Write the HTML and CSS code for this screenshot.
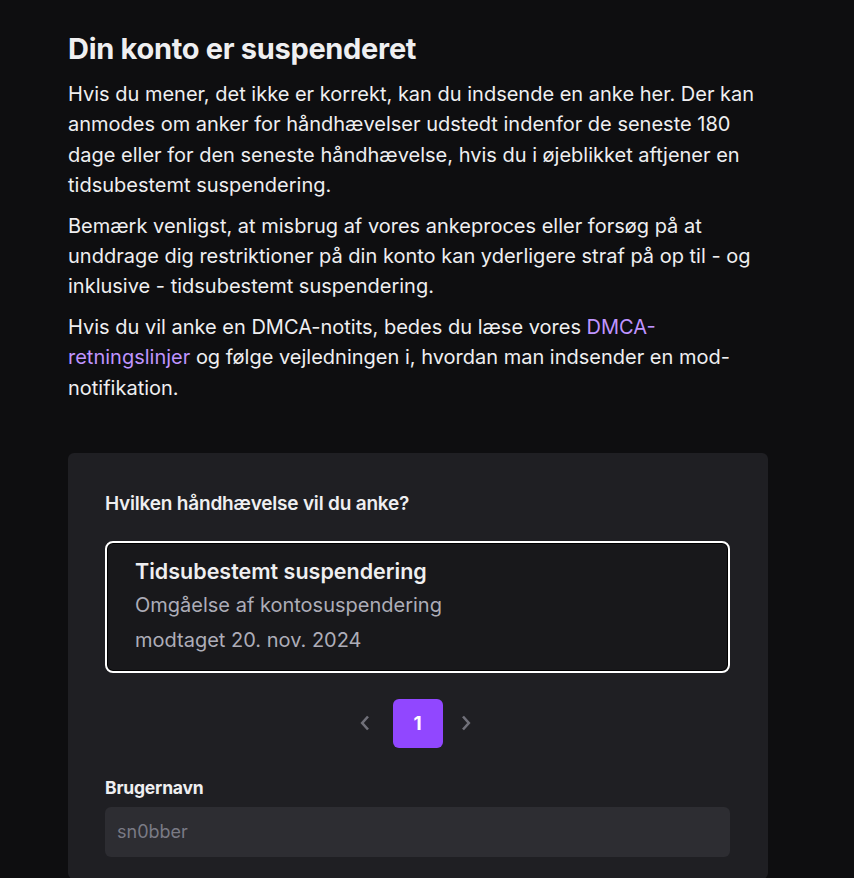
FILE: index.html
```
<!DOCTYPE html>
<html lang="da">
<head>
  <meta charset="UTF-8">
  <meta name="viewport" content="width=device-width, initial-scale=1.0">
  <title>Din konto er suspenderet</title>
  <link rel="stylesheet" href="styles.css">
</head>
<body>
  <div class="container">
    <h1 class="title">Din konto er suspenderet</h1>
    <p class="text">Hvis du mener, det ikke er korrekt, kan du indsende en anke her. Der kan anmodes om anker for håndhævelser udstedt indenfor de seneste 180 dage eller for den seneste håndhævelse, hvis du i øjeblikket aftjener en tidsubestemt suspendering.</p>
    <p class="text">Bemærk venligst, at misbrug af vores ankeproces eller forsøg på at unddrage dig restriktioner på din konto kan yderligere straf på op til - og inklusive - tidsubestemt suspendering.</p>
    <p class="text">Hvis du vil anke en DMCA-notits, bedes du læse vores <a href="#" class="link">DMCA-retningslinjer</a> og følge vejledningen i, hvordan man indsender en mod-notifikation.</p>

    <div class="card">
      <h3 class="label">Hvilken håndhævelse vil du anke?</h3>
      <div class="enforcement selected">
        <div class="enf-title">Tidsubestemt suspendering</div>
        <div class="enf-sub">Omgåelse af kontosuspendering</div>
        <div class="enf-sub">modtaget 20. nov. 2024</div>
      </div>

      <div class="pager">
        <button class="arrow prev" aria-label="Forrige">
          <svg width="10" height="16" viewBox="0 0 10 16"><path d="M8 1.5 L2.2 8 L8 14.5" fill="none" stroke="currentColor" stroke-width="2.6"/></svg>
        </button>
        <button class="page active">1</button>
        <button class="arrow next" aria-label="Næste">
          <svg width="10" height="16" viewBox="0 0 10 16"><path d="M2 1.5 L7.8 8 L2 14.5" fill="none" stroke="currentColor" stroke-width="2.6"/></svg>
        </button>
      </div>

      <label class="field-label" for="username">Brugernavn</label>
      <input id="username" class="field" type="text" placeholder="sn0bber">
    </div>
  </div>
</body>
</html>
```

FILE: styles.css
```
/* page */
body {
  margin: 0;
  padding: 0;
  background-color: #0e0e10;
  color: #efeff1;
  font-family: Inter, "Noto Sans", sans-serif;
}
.container {
  width: 700px;
  padding: 31px 0 0 68px;
}
.title {
  font-size: 29px;
  font-weight: 700;
  line-height: 36px;
  margin: 0 0 12px;
  letter-spacing: -0.3px;
}
.text {
  font-size: 20px;
  line-height: 30.3px;
  margin: 0 0 10.5px;
}
.link {
  color: #bf94ff;
  text-decoration: none;
}

/* card */
.card {
  margin-top: 50px;
  background-color: #1f1f23;
  border-radius: 6px;
  padding: 37px 38px 22px 37px;
}
.label {
  font-size: 19px;
  font-weight: 600;
  line-height: 28px;
  margin: 0 0 23px;
  letter-spacing: -0.2px;
}
.enforcement {
  border: 2px solid #ffffff;
  border-radius: 8px;
  background-color: #18181b;
  padding: 13px 28px;
  box-shadow: inset 0 0 0 1px #000;
}
.enf-title {
  font-size: 21.5px;
  font-weight: 600;
  line-height: 30px;
  margin-bottom: 2px;
}
.enf-sub {
  font-size: 20px;
  line-height: 35px;
  color: #adadb8;
}

/* pagination */
.pager {
  display: flex;
  justify-content: center;
  align-items: center;
  margin: 26px 0 28px;
}
.pager button {
  border: none;
  font-family: inherit;
  cursor: pointer;
}
.arrow {
  width: 30px;
  height: 30px;
  background: none;
  color: #707079;
  display: flex;
  align-items: center;
  justify-content: center;
  padding: 0;
}
.prev {
  margin-right: 13px;
}
.next {
  margin-left: 8px;
  margin-right: 5px;
}
.page {
  width: 50px;
  height: 49px;
  border-radius: 6px;
  font-size: 19px;
  font-weight: 700;
  color: #fff;
  background-color: #2f2f35;
}
.page.active {
  background-color: #9147ff;
}

/* form */
.field-label {
  display: block;
  font-size: 17.5px;
  font-weight: 700;
  line-height: 24px;
  margin-bottom: 7px;
  letter-spacing: -0.2px;
}
.field {
  display: block;
  box-sizing: border-box;
  width: 100%;
  height: 50px;
  border: none;
  border-radius: 6px;
  background-color: #2d2d32;
  color: #efeff1;
  font-family: inherit;
  font-size: 18px;
  padding: 0 0 0 12px;
  outline: none;
}
.field::placeholder {
  color: #7a7a85;
}
```
